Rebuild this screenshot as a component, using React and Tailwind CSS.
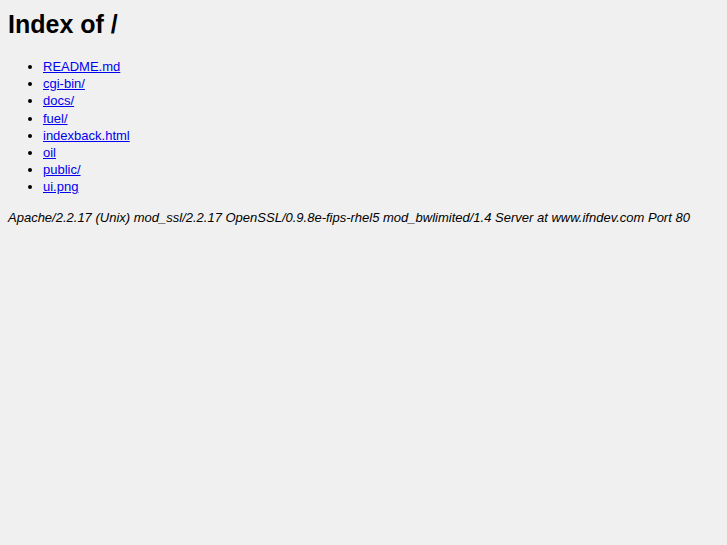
export default function App() {
  const items = ["README.md", "cgi-bin/", "docs/", "fuel/", "indexback.html", "oil", "public/", "ui.png"];
  return (
    <div className="min-h-[545px] bg-[#f0f0f0] px-[8px] pt-[9px] text-black font-['Liberation_Sans',Arial,sans-serif]">
      <h1 className="m-0 text-[25px] leading-[30px] font-bold">Index of /</h1>
      <ul className="mt-[19px] mb-0 list-disc pl-[35px] text-[13px] leading-[17.2px]">
        {items.map((it) => (
          <li key={it}>
            <a href="#" className="text-[#0000ee] underline">{it}</a>
          </li>
        ))}
      </ul>
      <address className="mt-[13px] italic text-[13px] leading-[17.2px]">
        Apache/2.2.17 (Unix) mod_ssl/2.2.17 OpenSSL/0.9.8e-fips-rhel5 mod_bwlimited/1.4 Server at www.ifndev.com Port 80
      </address>
    </div>
  );
}
